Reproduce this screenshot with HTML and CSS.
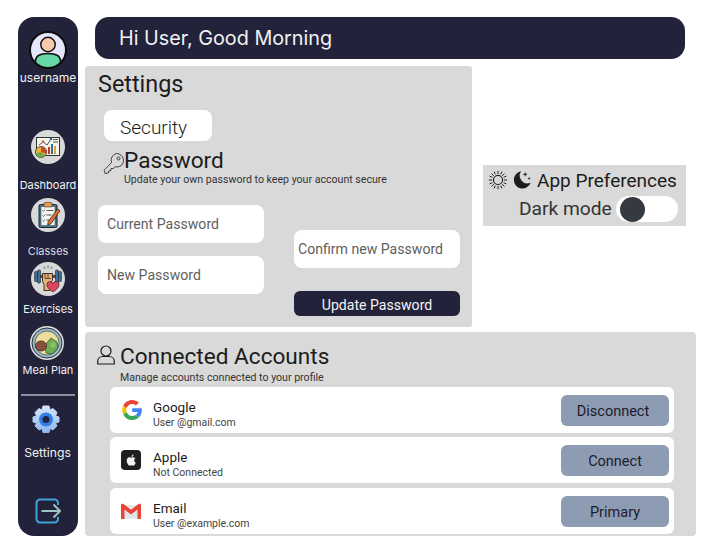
FILE: index.html
```html
<!DOCTYPE html>
<html lang="en">
<head>
<meta charset="utf-8">
<title>Settings</title>
<link rel="stylesheet" href="styles.css">
</head>
<body>
<div class="app">
  <nav class="sidebar">
    <svg class="avatar" viewBox="0 0 38 38" width="38" height="38">
      <defs><clipPath id="av"><circle cx="19" cy="19" r="17.5"/></clipPath></defs>
      <circle cx="19" cy="19" r="18" fill="#e6e6fa"/>
      <g clip-path="url(#av)">
        <path d="M6.500 38v-8c0-5 5-7.500 12.500-7.500s12.500 2.500 12.500 7.500v8z" fill="#65d6a6" stroke="#111" stroke-width="1.500"/>
        <circle cx="19" cy="13.500" r="7.200" fill="#f9c9ae" stroke="#111" stroke-width="1.500"/>
      </g>
      <circle cx="19" cy="19" r="18" fill="none" stroke="#0c0c0c" stroke-width="2"/>
    </svg>
    <span class="user">username</span>

    <a class="item item-dash">
      <svg class="ico" viewBox="0 0 34 34" width="34" height="34">
        <circle cx="17" cy="17" r="17" fill="#d9d9d9"/>
        <rect x="5.5" y="7.5" width="23" height="18" fill="#f4f4ee" stroke="#333" stroke-width="1"/>
        <path d="M8 15l4-3 4 3 4-6" fill="none" stroke="#444" stroke-width=".9"/>
        <circle cx="12" cy="11.5" r="1.3" fill="#e2652c"/><circle cx="20" cy="9" r="1.3" fill="#2b6ba8"/>
        <rect x="22" y="9" width="5" height="1" fill="#555"/><rect x="22" y="11.5" width="5" height="1" fill="#555"/>
        <rect x="17" y="17" width="2" height="7" fill="#b33d2a"/><rect x="20" y="14" width="2" height="10" fill="#2f6ea0"/><rect x="23" y="16" width="2" height="8" fill="#e0a52d"/>
        <circle cx="10" cy="22" r="5.6" fill="#e9b531" stroke="#333" stroke-width=".8"/>
        <path d="M10 22v-5.600a5.600 5.600 0 0 1 5.300 7.300z" fill="#d2452e"/>
        <path d="M4.700 23.500l5.300-1.500 4 4a5.600 5.600 0 0 1-9.300-2.500z" fill="#6aa84f"/>
      </svg>
      <span class="lbl">Dashboard</span>
    </a>
    <a class="item item-classes">
      <svg class="ico" viewBox="0 0 34 34" width="34" height="34">
        <circle cx="17" cy="17" r="17" fill="#d9d9d9"/>
        <rect x="8" y="6.500" width="18" height="23" rx="1.500" fill="#3a7fa0" stroke="#222"/>
        <rect x="10" y="8.500" width="14" height="19" fill="#f6f6f0" stroke="#333" stroke-width=".5"/>
        <rect x="13" y="4.500" width="8" height="4.500" rx="1" fill="#ef9b4b" stroke="#333" stroke-width=".6"/>
        <path d="M11.500 12.500l1 1 1.500-2M11.500 17.500l1 1 1.500-2M11.500 22.500l1 1 1.500-2" fill="none" stroke="#333" stroke-width=".7"/>
        <path d="M15.500 12.500h7M15.500 17h5M15.500 22h3" stroke="#555"/>
        <path d="M26.500 11l2.500 1.700-9 13-3.300 1.500.4-3.500z" fill="#e8702e" stroke="#2a2a2a" stroke-width=".8"/>
      </svg>
      <span class="lbl lbl-dim">Classes</span>
    </a>
    <a class="item item-ex">
      <svg class="ico" viewBox="0 0 34 34" width="34" height="34">
        <circle cx="17" cy="17" r="17" fill="#d9d9d9"/>
        <rect x="6" y="13" width="22" height="3" fill="#4a5560"/>
        <rect x="3.500" y="9.500" width="3" height="10" rx="1" fill="#3f6f97" stroke="#222" stroke-width=".6"/>
        <rect x="6.500" y="8" width="3" height="13" rx="1" fill="#3f6f97" stroke="#222" stroke-width=".6"/>
        <rect x="24.500" y="8" width="3" height="13" rx="1" fill="#3f6f97" stroke="#222" stroke-width=".6"/>
        <rect x="27.500" y="9.500" width="3" height="10" rx="1" fill="#3f6f97" stroke="#222" stroke-width=".6"/>
        <path d="M11.500 11.500h10v7l-2.500 3v7h-6v-6l-1.500-3z" fill="#e9b27c" stroke="#2c2018" stroke-width=".9"/>
        <path d="M14 11.500v5M17 11.500v5M14 16.500h6" stroke="#2c2018" stroke-width=".7" fill="none"/>
        <path d="M17 3.500v3M13 4.500l1 2.500M21 4.500l-1 2.500" stroke="#555" stroke-width=".8"/>
        <path d="M22 30c-4-2.700-6-4.700-6-7a3 3 0 0 1 6-1 3 3 0 0 1 6 1c0 2.300-2 4.300-6 7z" fill="#e2445c" stroke="#2a2a2a" stroke-width=".7"/>
      </svg>
      <span class="lbl lbl-ex">Exercises</span>
    </a>
    <a class="item item-meal">
      <svg class="ico" viewBox="0 0 34 34" width="34" height="34">
        <circle cx="17" cy="17" r="17" fill="#d9d9d9"/>
        <circle cx="17" cy="17" r="15" fill="#8fb8cf" stroke="#333"/>
        <circle cx="17" cy="17" r="12" fill="#ecdf9c" stroke="#444" stroke-width=".7"/>
        <path d="M15 19l6-7 6 4 1 6-6 6-6-1z" fill="#6fae55" stroke="#2d4a2a" stroke-width=".7"/>
        <circle cx="23" cy="19" r="2.500" fill="#8bc46a"/>
        <ellipse cx="11" cy="20" rx="5.500" ry="5" fill="#9a5a45" stroke="#3a2218" stroke-width=".8"/>
        <path d="M7 18h8M6.500 20.500h9M7.500 23h7" stroke="#3a2218" stroke-width=".5"/>
      </svg>
      <span class="lbl lbl-meal">Meal Plan</span>
    </a>
    <hr class="rule">
    <svg class="gear" viewBox="0 0 28 28" width="28" height="28">
      <defs><linearGradient id="gr" x1="0" y1="0" x2="0" y2="1"><stop offset="0" stop-color="#d5e5fa"/><stop offset="1" stop-color="#8fb6ec"/></linearGradient></defs>
      <path d="M11 1h6l1 4 3-1.500 4 4L23.500 11l3.500 1v5l-3.500 1 1.500 3-4 4-3-1.500-1 4h-6l-1-4-3 1.500-4-4L4.500 18 1 17v-5l3.500-1L3 7.500l4-4L10 5z" fill="url(#gr)" stroke="url(#gr)" stroke-linejoin="round" stroke-width="1"/>
      <circle cx="14" cy="14.500" r="7" fill="#2f7ee6"/>
      <circle cx="14" cy="14.500" r="3.500" fill="#232340"/>
    </svg>
    <span class="set">Settings</span>
    <svg class="logout" viewBox="0 0 26 26" width="26" height="26">
      <path d="M23 7V5a3.500 3.500 0 0 0-3.500-3.500H5A3.500 3.500 0 0 0 1.500 5v16A3.500 3.500 0 0 0 5 24.500h14.500A3.500 3.500 0 0 0 23 21v-2" fill="none" stroke="#3fa4dc" stroke-width="2"/>
      <path d="M6.500 13H25M18.500 6.500L25 13l-6.500 6.500" fill="none" stroke="#9cc4c6" stroke-width="2"/>
    </svg>
  </nav>

  <main class="main">
    <header class="greet">Hi User, Good Morning</header>
    <div class="upper">
      <section class="settings">
        <h1 class="page-title">Settings</h1>
        <div class="tab">Security</div>
        <div class="head-row">
          <svg class="key" viewBox="0 0 22 23" width="22" height="23">
            <path d="M13.500 1.500a7 7 0 0 1 7 7 6.500 6.500 0 0 1-7 6.500l-1.500-.3-1.700 1.800H8l-.2 2.200-2 .2-.3 2-3.500.6-.8-3.300 7.300-7.700A7 7 0 0 1 13.500 1.500z" fill="none" stroke="#1c1c1c" stroke-width=".8"/>
            <circle cx="15.500" cy="6.500" r="1.500" fill="none" stroke="#1c1c1c" stroke-width=".8"/>
          </svg>
          <h2 class="h-big">Password</h2>
        </div>
        <p class="desc desc-pass">Update your own password to keep your account secure</p>
        <form class="form">
          <div class="col">
            <div class="field">Current Password</div>
            <div class="field">New Password</div>
          </div>
          <div class="col col-r">
            <div class="field field-tight">Confirm new Password</div>
            <button class="update" type="button">Update Password</button>
          </div>
        </form>
      </section>
      <aside class="prefs">
        <div class="pref-top">
          <svg viewBox="0 0 22 22" width="20" height="20">
            <circle cx="11" cy="11" r="5" fill="none" stroke="#111" stroke-width="1.200"/>
            <path d="M11 1v3.500M11 17.500V21M1 11h3.500M17.500 11H21M3.900 3.900l2.500 2.500M15.600 15.600l2.500 2.500M3.900 18.100l2.500-2.500M15.600 6.400l2.500-2.500M6.800 1.800l1.200 3M14 17.200l1.200 3M1.800 15.200l3-1.200M17.200 8l3-1.200M1.800 6.800l3 1.200M17.200 14l3 1.200M6.800 20.200l1.200-3M14 4.800l1.200-3" stroke="#111" stroke-width="1"/>
          </svg>
          <svg viewBox="0 0 22 22" width="20" height="20">
            <path d="M10 1.500a9.500 9.500 0 1 0 10.500 12.500A8.500 8.500 0 0 1 10 1.500z" fill="#1c1c1c"/>
            <path d="M14.500 2l.7 2 2 .7-2 .7-.7 2-.7-2-2-.7 2-.7zM18.800 7.200l.5 1.500 1.500.5-1.500.5-.5 1.500-.5-1.500-1.500-.5 1.500-.5z" fill="#1c1c1c"/>
          </svg>
          <span class="pref-title">App Preferences</span>
        </div>
        <div class="pref-bottom">
          <span class="dark">Dark mode</span>
          <span class="toggle"><span class="knob"></span></span>
        </div>
      </aside>
    </div>
    <section class="accounts">
      <div class="head-row head-acc">
        <svg viewBox="0 0 18 20" width="18" height="20">
          <circle cx="9" cy="6" r="5" fill="none" stroke="#1c1c1c" stroke-width="1.200"/>
          <path d="M.7 19v-2.500c0-3 2.300-5 5-5h6.600c2.700 0 5 2 5 5V19z" fill="none" stroke="#1c1c1c" stroke-width="1.200"/>
        </svg>
        <h2 class="h-big">Connected Accounts</h2>
      </div>
      <p class="desc desc-acc">Manage accounts connected to your profile</p>
      <ul class="rows">
        <li class="row">
          <svg class="brand" viewBox="0 0 20 20" width="20" height="20">
            <path d="M19.800 10.200c0-.7-.1-1.400-.2-2H10.200v3.800h5.400c-.2 1.300-1 2.300-2 3l3.200 2.500c1.900-1.700 3-4.300 3-7.300z" fill="#4285f4"/>
            <path d="M10.200 20c2.700 0 4.900-.9 6.600-2.500l-3.200-2.500c-.9.600-2 1-3.400 1-2.600 0-4.800-1.800-5.600-4.100L1.300 14.400C3 17.800 6.300 20 10.200 20z" fill="#34a853"/>
            <path d="M4.600 11.900a6 6 0 0 1 0-3.800L1.300 5.600a10 10 0 0 0 0 8.800z" fill="#fbbc04"/>
            <path d="M10.200 4c1.500 0 2.800.5 3.800 1.500l2.900-2.900A9.700 9.700 0 0 0 10.200 0C6.300 0 3 2.200 1.300 5.600l3.300 2.500C5.400 5.800 7.600 4 10.200 4z" fill="#ea4335"/>
          </svg>
          <div class="who"><span class="name">Google</span><span class="mail">User @gmail.com</span></div>
          <button class="act act-left" type="button">Disconnect</button>
        </li>
        <li class="row">
          <svg class="brand brand-l" viewBox="0 0 20 20" width="20" height="20">
            <rect width="20" height="20" rx="4" fill="#1f1f1f"/>
            <path d="M13.200 10.300c0-1.300 1.100-1.900 1.100-2-.6-.9-1.600-1-2-1-.8-.1-1.600.5-2 .5s-1.100-.5-1.800-.5c-.9 0-1.800.6-2.300 1.400-1 1.700-.2 4.200.7 5.600.5.700 1 1.400 1.800 1.400.7 0 1-.5 1.800-.5s1.100.5 1.800.5 1.300-.7 1.700-1.400c.5-.8.7-1.500.7-1.600-.1 0-1.500-.6-1.500-2.400zM11.900 6.300c.4-.5.600-1.100.6-1.700-.5 0-1.200.3-1.600.8-.3.400-.6 1-.5 1.600.6 0 1.100-.3 1.500-.7z" fill="#f2f2f2"/>
          </svg>
          <div class="who"><span class="name">Apple</span><span class="mail">Not Connected</span></div>
          <button class="act" type="button">Connect</button>
        </li>
        <li class="row">
          <svg class="brand brand-l" viewBox="0 0 20 20" width="20" height="20">
            <path d="M1.500 4h17v13.500h-17z" fill="#e6e9ec"/>
            <path d="M10 10.500L18.500 4v13.500h-17V4z" fill="#dfe4e8"/>
            <path d="M0 4.500C0 3 1.500 2.300 2.800 3.200L10 8.700l7.200-5.500C18.500 2.300 20 3 20 4.500V17a1 1 0 0 1-1 1h-2.500V8.500L10 13.500 3.500 8.500V18H1a1 1 0 0 1-1-1z" fill="#ea4335"/>
          </svg>
          <div class="who"><span class="name">Email</span><span class="mail">User @example.com</span></div>
          <button class="act" type="button">Primary</button>
        </li>
      </ul>
    </section>
  </main>
</div>
</body>
</html>
```

FILE: styles.css
```css
* { box-sizing: border-box; }
html, body { margin: 0; padding: 0; background: #fff; }
body { width: 702px; height: 544px; overflow: hidden; font-family: Roboto, sans-serif; color: #1c1c1c; }
h1, h2, p, ul { margin: 0; padding: 0; font-weight: 400; }
ul { list-style: none; }

.app { display: flex; padding: 17px 6px 8px 18px; height: 544px; }

.sidebar {
  width: 60px; height: 519px; flex: none;
  background: #22223b; border-radius: 16px;
  display: flex; flex-direction: column; align-items: center;
  padding-top: 14px;
  font-family: Inter, sans-serif; color: #f2f2f2;
}
.avatar { flex: none; }
.user { font-size: 12px; line-height: 14px; margin-top: 2px; white-space: nowrap; }
.item { display: flex; flex-direction: column; align-items: center; }
.ico { flex: none; margin-left: -1px; }
.lbl { font-size: 11px; line-height: 13px; white-space: nowrap; }
.lbl-dim { color: #d9d9e4; }
.item-dash { margin-top: 45px; }
.item-dash .lbl { margin-top: 15px; }
.item-classes { margin-top: 6px; }
.item-classes .lbl { margin-top: 13px; }
.item-ex { margin-top: 4px; }
.item-ex .lbl { margin-top: 7px; }
.item-meal { margin-top: 10px; }
.item-meal .lbl { margin-top: 4px; }
.rule { width: 54px; height: 2px; border: 0; background: #8f8f9c; margin: 17px 0 0; flex: none; }
.gear { margin: 9px 4px 0 0; flex: none; }
.set { font-size: 12.200px; line-height: 15px; margin: 12px 1px 0 0; }
.logout { margin-top: 38px; flex: none; }

.main { flex: 1; min-width: 0; margin-left: 7px; display: flex; flex-direction: column; }
.greet {
  height: 42px; margin: 0 11px 0 10px; padding-left: 24px;
  background: #22223b; color: #f2f2f2; border-radius: 14px;
  font: 400 19.800px/42px Inter, sans-serif;
}
.upper { display: flex; margin-top: 7px; align-items: flex-start; }

.settings { width: 387px; height: 261px; background: #d9d9d9; border-radius: 3px; padding: 2px 0 0 13px; }
.page-title { font-size: 23.400px; line-height: 33px; }
.tab {
  width: 108px; height: 31px; margin: 9px 0 0 6px; padding-left: 16px;
  background: #fff; border-radius: 8px; font-size: 19px; font-weight: 300; line-height: 35px;
}
.head-row { display: flex; align-items: center; }
.settings .head-row { margin: 2px 0 0 5px; }
.h-big { font-size: 22.600px; line-height: 32px; white-space: nowrap; padding-top: 2px; }
.key { flex: none; margin-top: 6px; margin-right: -1px; }
.desc { font-size: 10.600px; line-height: 13px; color: #333; white-space: nowrap; }
.desc-pass { margin: -4px 0 0 26px; }
.form { display: flex; gap: 30px; margin-top: 19px; }
.col { width: 166px; display: flex; flex-direction: column; gap: 13px; }
.col-r { padding-top: 25px; gap: 23px; }
.field {
  height: 38px; background: #fff; border-radius: 8px; padding: 0 0 0 9px;
  font-size: 14.100px; line-height: 38px; color: #5f5f5f; white-space: nowrap;
}
.field-tight { padding-left: 4px; }
.update {
  height: 25px; border: 0; border-radius: 6px; background: #22223b; color: #f2f2f2;
  font: 400 14.100px/25px Roboto, sans-serif; padding: 2px 0 0;
}

.prefs { width: 203px; height: 61px; margin: 99px 0 0 11px; background: #d9d9d9; padding: 4px 0 0 5px; }
.pref-top { display: flex; align-items: center; gap: 4px; height: 22px; }
.pref-title { font-size: 19px; line-height: 22px; margin: 1px 0 0 1px; white-space: nowrap; }
.pref-bottom { display: flex; align-items: center; justify-content: space-between; margin: 5px 8px 0 31px; height: 26px; }
.dark { font-size: 19.200px; line-height: 26px; color: #333; white-space: nowrap; }
.toggle { width: 62px; height: 26px; border-radius: 13px; background: #fff; padding-left: 4px; display: flex; align-items: center; flex: none; }
.knob { width: 25px; height: 25px; border-radius: 50%; background: #343a40; }

.accounts { flex: none; height: 204px; margin-top: 5px; background: #d9d9d9; border-radius: 4px; padding: 8px 22px 0 12px; }
.head-acc { gap: 5px; height: 32px; }
.head-acc svg { flex: none; margin-top: -3px; }
.desc-acc { margin: -1px 0 0 23px; }
.rows { margin: 3px 0 0 13px; display: flex; flex-direction: column; gap: 4px; }
.row { height: 46px; background: #fff; border-radius: 6px; display: flex; align-items: center; padding: 0 5px 0 12px; }
.row:last-child { margin-top: 1px; }
.brand { flex: none; }
.brand-l { margin-left: -1px; margin-right: 1px; }
.who { flex: 1; display: flex; flex-direction: column; margin: 9px 0 0 11px; }
.name { font-size: 13.500px; line-height: 16px; }
.mail { font-size: 10.500px; line-height: 16px; color: #444; }
.act {
  width: 108px; height: 31px; border: 0; border-radius: 6px; background: #8d9bb3; color: #1c1c2c;
  font: 400 14.500px/31px Roboto, sans-serif; padding: 1px 0 0;
}
.act-left { padding-right: 4px; }
```
